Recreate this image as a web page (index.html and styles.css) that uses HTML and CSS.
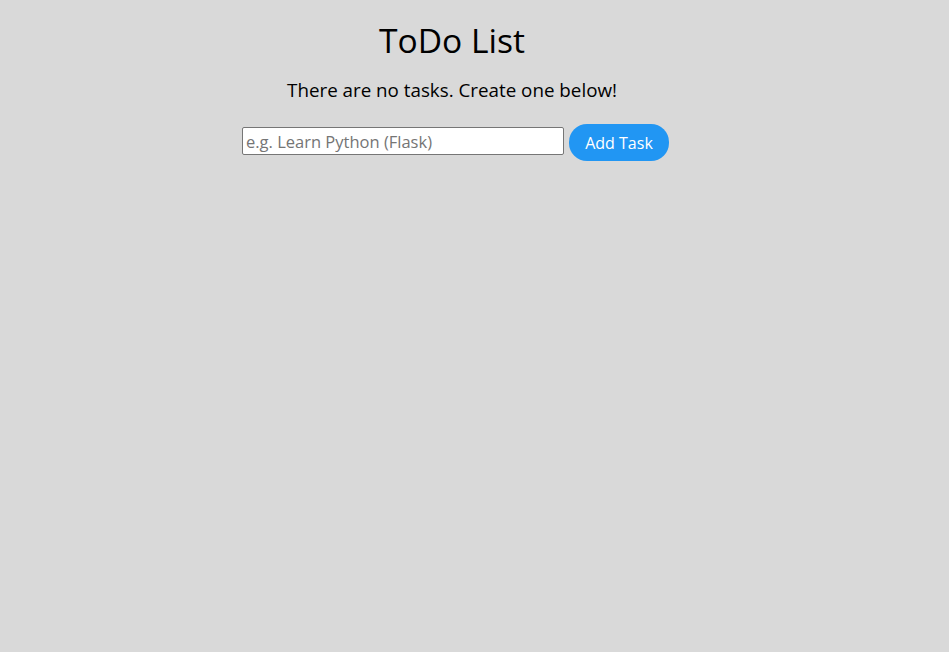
FILE: index.html
```html
<!DOCTYPE html>
<html>
<head>
<meta charset="utf-8">
<link rel="stylesheet" href="styles.css">
</head>
<body>
<div class="content">
  <h1 class="title">ToDo List</h1>
  <p class="empty">There are no tasks. Create one below!</p>
  <form class="add-form">
    <input class="task-input" type="text" placeholder="e.g. Learn Python (Flask)">
    <button class="add-btn" type="button">Add Task</button>
  </form>
</div>
</body>
</html>
```
FILE: styles.css
```css
html, body {
  margin: 0;
  padding: 0;
  background: #d9d9d9;
  height: 100%;
}
body {
  font-family: "Open Sans", "Noto Sans", sans-serif;
  color: #000;
}
.content {
  display: flex;
  flex-direction: column;
  align-items: center;
  padding-top: 17px;
  padding-right: 45px;
}
.title {
  margin: 0;
  font-size: 33.6px;
  font-weight: 400;
  line-height: 46px;
}
.empty {
  margin: 15px 0 0;
  font-size: 18.8px;
  line-height: 24px;
}
.add-form {
  display: flex;
  align-items: flex-start;
  gap: 5px;
  margin-top: 22px;
  margin-left: 7px;
}
.task-input {
  box-sizing: border-box;
  width: 322px;
  height: 28px;
  margin-top: 3px;
  border: 1px solid #767676;
  border-radius: 2px;
  background: #fff;
  padding: 1px 3px;
  font-family: "Open Sans", sans-serif;
  font-size: 16.5px;
}
.task-input::placeholder {
  color: #757575;
}
.add-btn {
  box-sizing: border-box;
  width: 100px;
  height: 37px;
  border: none;
  border-radius: 18px;
  background: #2196f3;
  color: #fff;
  font-family: "Open Sans", sans-serif;
  font-size: 16px;
  padding: 0;
}
```
